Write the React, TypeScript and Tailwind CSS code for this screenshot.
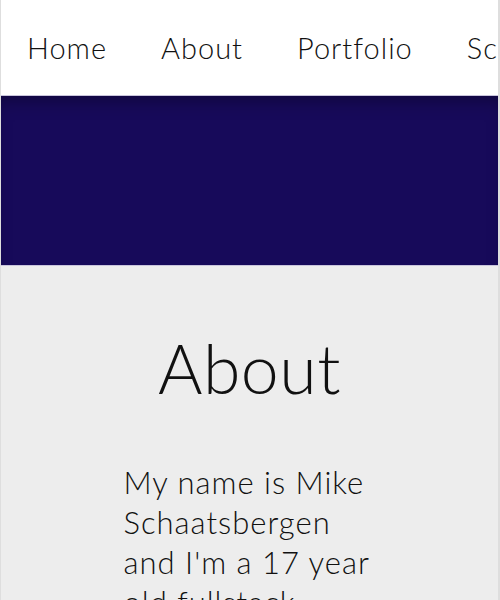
const links = ['Home', 'About', 'Portfolio', 'Schoolwork'];

export default function App() {
  return (
    <div
      className="h-[600px] w-[500px] overflow-hidden border-l border-r-2 border-[#dedede] bg-[#ededed] text-[#111]"
      style={{ fontFamily: 'Lato, "Open Sans", sans-serif' }}
    >
      {/* nav */}
      <nav className="flex h-[95px] items-center overflow-hidden whitespace-nowrap bg-white pl-[26px]">
        {links.map((l) => (
          <a key={l} className="mr-[54px] shrink-0 text-[29px] font-light tracking-[1px] text-[#111]">
            {l}
          </a>
        ))}
      </nav>

      {/* banner */}
      <div className="h-[171px] border-y border-[#c9c5dc] bg-[#170a5a] shadow-[inset_0_12px_18px_-8px_rgba(0,0,0,0.35)]" />

      {/* about */}
      <section className="flex flex-col items-center">
        <h1 className="mt-[68px] text-[68px] font-light leading-none tracking-[0.5px]">About</h1>
        <p className="mt-[60px] w-[252px] text-[31px] font-light leading-[40px] tracking-[1px]">
          My name is Mike Schaatsbergen and I'm a 17 year old fullstack developer
        </p>
      </section>
    </div>
  );
}
